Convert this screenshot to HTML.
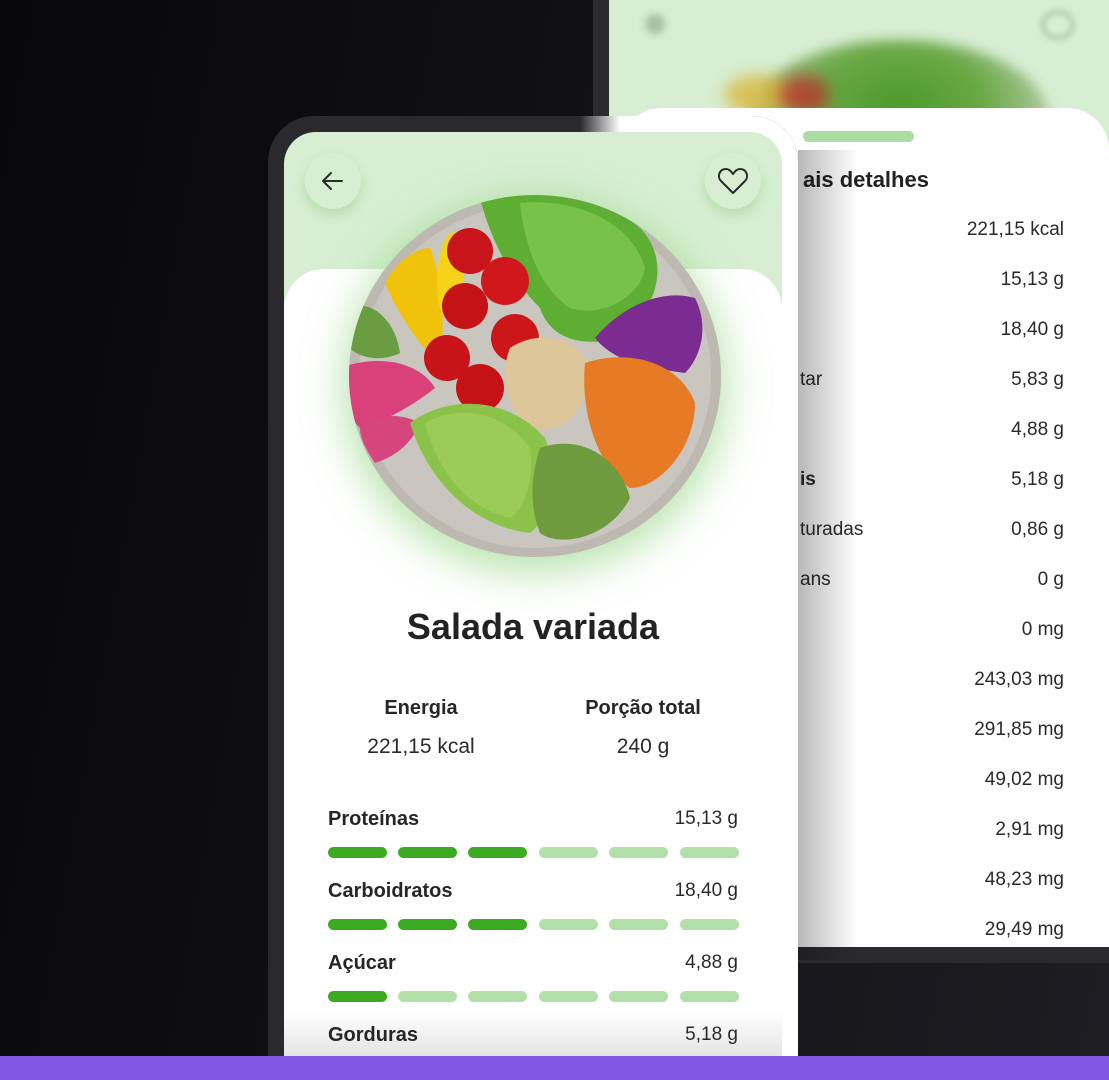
<!DOCTYPE html>
<html><head><meta charset="utf-8"><style>
*{margin:0;padding:0;box-sizing:border-box}
body{width:1109px;height:1080px;overflow:hidden;position:relative;background:linear-gradient(100deg,#08080a 0%,#121215 50%,#1e1e22 100%);font-family:"Liberation Sans",sans-serif;color:#222}
.a{position:absolute}
.r{position:absolute;right:45px;font-size:19px;color:#2a2a2a;text-align:right}
.l{position:absolute;left:800px;font-size:19px;color:#2a2a2a}
.bars{position:absolute;left:328px;width:411px;height:11px}
.bars i{position:absolute;top:0;width:59px;height:11px;border-radius:6px;background:#b3dfa8}
.bars i.on{background:#3dab22}
.lab{position:absolute;left:328px;font-size:20px;font-weight:bold;color:#262626}
.val{position:absolute;right:371px;font-size:19px;color:#2a2a2a}
</style></head><body>
<!-- back phone -->
<div class="a" style="left:593px;top:0;width:516px;height:963px;background:#2b2b2e"></div>
<div class="a" style="left:609px;top:0;width:500px;height:947px;background:#d7eed3;overflow:hidden">
  <div class="a" style="left:140px;top:40px;width:300px;height:160px;border-radius:50%;background:radial-gradient(ellipse at 50% 40%,#4c9a2c 0%,#6aa845 40%,#a9c79a 70%,rgba(215,238,211,0) 100%);filter:blur(6px)"></div>
  <div class="a" style="left:115px;top:75px;width:70px;height:40px;border-radius:50%;background:#d9b63a;filter:blur(8px);opacity:.8"></div>
  <div class="a" style="left:170px;top:75px;width:50px;height:40px;border-radius:50%;background:#b9362c;filter:blur(8px);opacity:.8"></div>
  <div class="a" style="left:36px;top:14px;width:20px;height:20px;border-radius:50%;background:#a9bca3;filter:blur(4px)"></div>
  <div class="a" style="left:432px;top:10px;width:34px;height:30px;border-radius:50%;border:4px solid #b2c6ac;filter:blur(3px)"></div>
</div>
<div class="a" style="left:620px;top:108px;width:489px;height:839px;background:#fff;border-radius:42px 42px 0 0"></div>
<div class="a" style="left:803px;top:131px;width:111px;height:11px;border-radius:6px;background:#acdca4"></div>
<div class="a" style="left:803px;top:167px;font-size:22px;font-weight:bold;color:#222">ais detalhes</div>
<div class="r" style="top:219px">221,15 kcal</div>
<div class="r" style="top:269px">15,13 g</div>
<div class="r" style="top:319px">18,40 g</div>
<div class="l" style="top:369px">tar</div><div class="r" style="top:369px">5,83 g</div>
<div class="r" style="top:419px">4,88 g</div>
<div class="l" style="top:469px;font-weight:bold">is</div><div class="r" style="top:469px">5,18 g</div>
<div class="l" style="top:519px">turadas</div><div class="r" style="top:519px">0,86 g</div>
<div class="l" style="top:569px">ans</div><div class="r" style="top:569px">0 g</div>
<div class="r" style="top:619px">0 mg</div>
<div class="r" style="top:669px">243,03 mg</div>
<div class="r" style="top:719px">291,85 mg</div>
<div class="r" style="top:769px">49,02 mg</div>
<div class="r" style="top:819px">2,91 mg</div>
<div class="r" style="top:869px">48,23 mg</div>
<div class="r" style="top:919px">29,49 mg</div>
<!-- shadow of front phone -->
<div class="a" style="left:798px;top:150px;width:60px;height:810px;background:linear-gradient(90deg,rgba(0,0,0,.28),rgba(0,0,0,0))"></div>
<!-- front phone -->
<div class="a" style="left:268px;top:116px;width:530px;height:960px;background:#2a2a2d;border-radius:46px 46px 0 0"></div>
<div class="a" style="left:580px;top:116px;width:218px;height:940px;border-radius:0 46px 0 0;background:linear-gradient(90deg,rgba(255,255,255,0),#fff 40px)"></div>
<div class="a" style="left:284px;top:132px;width:498px;height:924px;background:#d7eed3;border-radius:32px 32px 0 0;overflow:hidden">
  <div class="a" style="left:0;top:137px;width:498px;height:800px;background:#fff;border-radius:40px 40px 0 0"></div>
  <div class="a" style="left:0;top:880px;width:498px;height:44px;background:linear-gradient(#fff,#e4e4e4)"></div>
</div>
<!-- bowl glow -->
<div class="a" style="left:349px;top:195px;width:372px;height:362px;border-radius:50%;background:#c9c6bf;box-shadow:0 10px 40px 6px rgba(140,210,120,.6)"></div>
<svg class="a" style="left:340px;top:188px" width="390" height="375" viewBox="0 0 390 375">
<defs><clipPath id="c"><ellipse cx="195" cy="188" rx="186" ry="181"/></clipPath></defs>
<ellipse cx="195" cy="188" rx="186" ry="181" fill="#bdb9b1"/>
<ellipse cx="195" cy="188" rx="176" ry="172" fill="#c9c6bf"/>
<g clip-path="url(#c)">
<path d="M140 10 C190 -5 260 5 300 40 C330 70 320 120 280 150 C240 160 210 150 200 120 C170 90 150 50 140 10Z" fill="#5fae34"/>
<path d="M180 15 C230 10 290 30 305 80 C300 110 260 130 230 120 C200 100 185 60 180 15Z" fill="#79c24a"/>
<path d="M90 60 C100 80 110 160 95 170 C80 160 55 120 45 95 C55 75 75 60 90 60Z" fill="#f0c20c"/>
<path d="M110 45 C125 40 130 60 120 110 C112 140 100 130 98 110 C95 80 100 55 110 45Z" fill="#f7d21b"/>
<circle cx="130" cy="63" r="23" fill="#c8141a"/><circle cx="165" cy="93" r="24" fill="#d0181c"/>
<circle cx="125" cy="118" r="23" fill="#c41216"/><circle cx="175" cy="150" r="24" fill="#cc161a"/>
<circle cx="107" cy="170" r="23" fill="#c81418"/><circle cx="140" cy="200" r="24" fill="#c41216"/>
<path d="M255 150 C280 120 320 100 355 110 C370 140 360 170 345 185 C310 180 275 175 255 150Z" fill="#7a2c90"/>
<path d="M170 160 C200 140 240 150 250 180 C250 220 220 250 190 240 C165 220 160 185 170 160Z" fill="#ddc69a"/>
<path d="M245 175 C290 160 340 175 355 215 C355 260 320 300 290 300 C260 280 240 230 245 175Z" fill="#e67a25"/>
<path d="M0 180 C40 165 80 175 95 200 C70 220 40 235 20 240 C5 225 0 200 0 180Z" fill="#d8417a"/>
<path d="M20 240 C40 225 60 225 80 235 C70 260 50 270 35 275 C25 260 20 250 20 240Z" fill="#d6457d"/>
<path d="M70 235 C110 205 170 210 205 250 C220 290 210 330 190 345 C140 340 90 300 70 235Z" fill="#8bc34a"/>
<path d="M85 235 C120 215 165 225 190 260 C195 290 185 320 170 330 C130 320 100 290 85 235Z" fill="#9ccc57"/>
<path d="M200 260 C240 245 280 270 290 310 C270 350 220 360 200 345 C190 320 190 290 200 260Z" fill="#6f9a3e"/>
<path d="M5 120 C30 110 55 130 60 165 C40 175 15 170 5 155Z" fill="#6a9c42"/>
</g>
</svg>
<!-- buttons -->
<div class="a" style="left:305px;top:153px;width:56px;height:56px;border-radius:50%;background:#d7eed3;box-shadow:0 6px 12px rgba(140,200,120,.45)"></div>
<svg class="a" style="left:319px;top:167px" width="28" height="28" viewBox="0 0 28 28"><path d="M23 14H5M12 6L4 14L12 22" fill="none" stroke="#2a2a2a" stroke-width="2" stroke-linecap="round" stroke-linejoin="round"/></svg>
<div class="a" style="left:705px;top:153px;width:56px;height:56px;border-radius:50%;background:#d7eed3;box-shadow:0 6px 12px rgba(140,200,120,.45)"></div>
<svg class="a" style="left:717px;top:166px" width="32" height="30" viewBox="0 0 32 30"><path d="M16 27L4 15C0 11 2 3 9 3C12 3 14 5 16 8C18 5 20 3 23 3C30 3 32 11 28 15Z" fill="none" stroke="#2a2a2a" stroke-width="2" stroke-linejoin="round"/></svg>
<!-- text -->
<div class="a" style="left:284px;width:498px;top:606px;text-align:center;font-size:36px;font-weight:bold;color:#222">Salada variada</div>
<div class="a" style="left:321px;width:200px;top:697px;text-align:center;font-size:20px;font-weight:bold;color:#262626">Energia</div>
<div class="a" style="left:321px;width:200px;top:735px;text-align:center;font-size:21px;color:#2a2a2a">221,15 kcal</div>
<div class="a" style="left:543px;width:200px;top:697px;text-align:center;font-size:20px;font-weight:bold;color:#262626">Porção total</div>
<div class="a" style="left:543px;width:200px;top:735px;text-align:center;font-size:21px;color:#2a2a2a">240 g</div>
<div class="lab" style="top:808px">Proteínas</div><div class="val" style="top:808px">15,13 g</div>
<div class="bars" style="top:847px"><i class="on" style="left:0"></i><i class="on" style="left:70px"></i><i class="on" style="left:140px"></i><i style="left:211px"></i><i style="left:281px"></i><i style="left:352px"></i></div>
<div class="lab" style="top:880px">Carboidratos</div><div class="val" style="top:880px">18,40 g</div>
<div class="bars" style="top:919px"><i class="on" style="left:0"></i><i class="on" style="left:70px"></i><i class="on" style="left:140px"></i><i style="left:211px"></i><i style="left:281px"></i><i style="left:352px"></i></div>
<div class="lab" style="top:952px">Açúcar</div><div class="val" style="top:952px">4,88 g</div>
<div class="bars" style="top:991px"><i class="on" style="left:0"></i><i style="left:70px"></i><i style="left:140px"></i><i style="left:211px"></i><i style="left:281px"></i><i style="left:352px"></i></div>
<div class="lab" style="top:1024px">Gorduras</div><div class="val" style="top:1024px">5,18 g</div>
<div class="a" style="left:0;top:1056px;width:1109px;height:24px;background:#8257e5"></div>
</body></html>
